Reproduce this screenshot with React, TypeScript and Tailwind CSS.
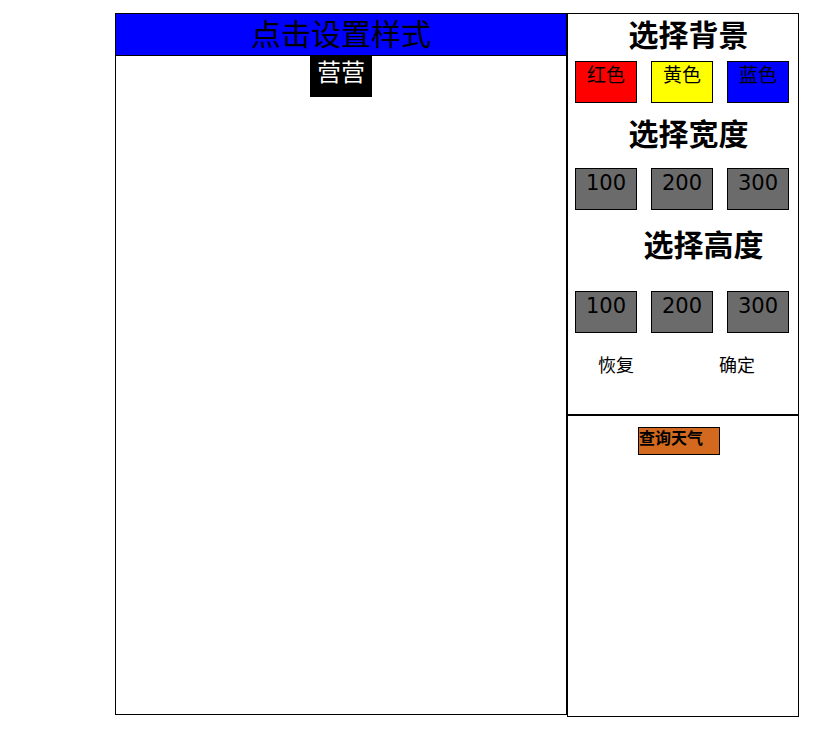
import React from "react";

const font = { fontFamily: '"DejaVu Sans", "Noto Sans CJK SC", sans-serif' };

function Btn({ bg, label, text }: { bg: string; label: string; text: string }) {
  return (
    <div
      className={`w-[62px] h-[42px] border border-black text-center ${bg} ${text}`}
    >
      {label}
    </div>
  );
}

export default function App() {
  return (
    <div className="bg-white w-[824px] h-[735px] text-black" style={font}>
      <div className="flex pt-[13px] pl-[115px] items-start">
        <div className="w-[452px] h-[702px] border border-black flex flex-col items-center">
          <div className="w-full h-[42px] bg-[#0000ff] border-b border-black text-[30px] leading-[42px] text-center">
            点击设置样式
          </div>
          <div className="w-[62px] h-[41px] bg-black text-white text-[24px] leading-[34px] text-center">
            营营
          </div>
        </div>
        <div className="w-[232px] h-[704px] border border-black flex flex-col">
          <div className="h-[402px] border-b-2 border-black flex flex-col">
            <div className="h-[47px] pl-[11px] text-center text-[30px] leading-[44px] font-bold">
              选择背景
            </div>
            <div className="flex gap-[14px] pl-[7px] text-[19px] leading-[26px]">
              <Btn bg="bg-[#ff0000]" text="text-black" label="红色" />
              <Btn bg="bg-[#ffff00]" text="text-black" label="黄色" />
              <Btn bg="bg-[#0000ff]" text="text-black" label="蓝色" />
            </div>
            <div className="h-[65px] pl-[11px] text-center text-[30px] leading-[64px] font-bold">
              选择宽度
            </div>
            <div className="flex gap-[14px] pl-[7px] text-[21px] leading-[28px]">
              <Btn bg="bg-[#6b6b6b]" text="text-black" label="100" />
              <Btn bg="bg-[#6b6b6b]" text="text-black" label="200" />
              <Btn bg="bg-[#6b6b6b]" text="text-black" label="300" />
            </div>
            <div className="h-[81px] pl-[41px] text-center text-[30px] leading-[72px] font-bold">
              选择高度
            </div>
            <div className="flex gap-[14px] pl-[7px] text-[21px] leading-[28px]">
              <Btn bg="bg-[#6b6b6b]" text="text-black" label="100" />
              <Btn bg="bg-[#6b6b6b]" text="text-black" label="200" />
              <Btn bg="bg-[#6b6b6b]" text="text-black" label="300" />
            </div>
            <div className="flex pl-[30px] gap-[85px] mt-[21px] text-[18px] leading-[24px]">
              <span>恢复</span>
              <span>确定</span>
            </div>
          </div>
          <div className="pt-[11px] pl-[70px]">
            <div className="w-[82px] h-[28px] bg-[#d2691e] border border-black text-[16px] leading-[22px] font-bold">
              查询天气
            </div>
          </div>
        </div>
      </div>
    </div>
  );
}
